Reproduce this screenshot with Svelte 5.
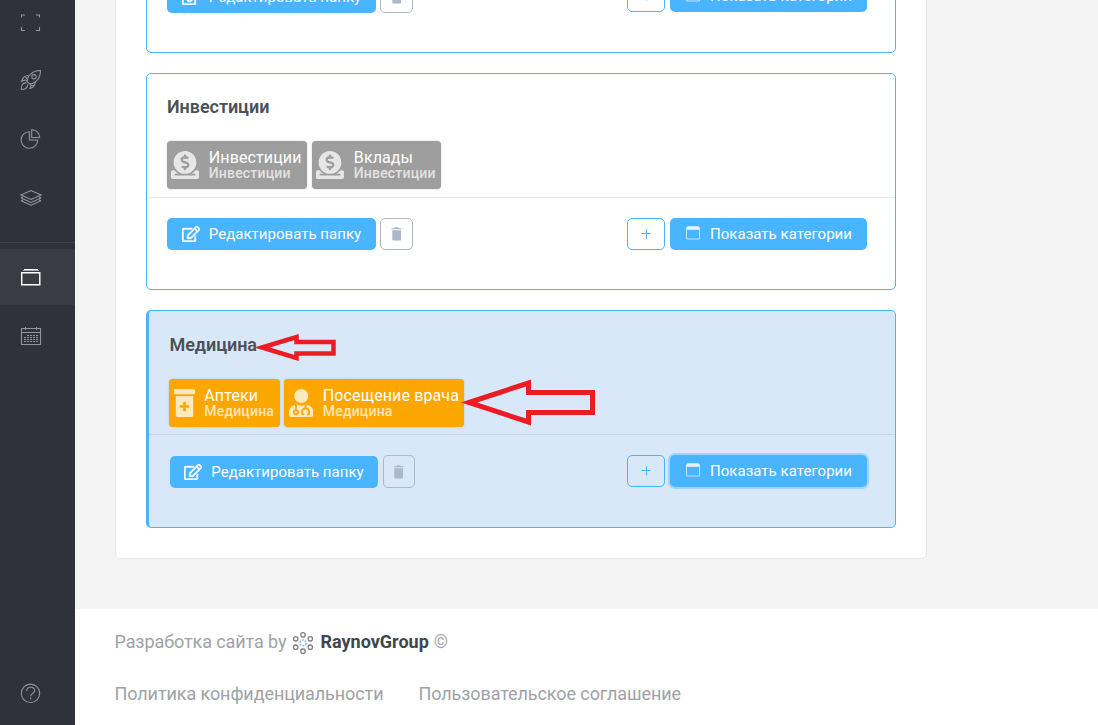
<script>
  const folders = [
    { title: 'Накопления', tiles: [] },
    {
      title: 'Инвестиции',
      tiles: [
        { name: 'Инвестиции', group: 'Инвестиции', icon: 'donate', color: '#9e9e9e', width: 140 },
        { name: 'Вклады', group: 'Инвестиции', icon: 'donate', color: '#9e9e9e', width: 129 }
      ]
    },
    {
      title: 'Медицина',
      active: true,
      tiles: [
        { name: 'Аптеки', group: 'Медицина', icon: 'bottle', color: '#fba700', width: 111 },
        { name: 'Посещение врача', group: 'Медицина', icon: 'doctor', color: '#fba700', width: 180 }
      ]
    }
  ];
  const ring = [[11, 2.8], [18.3, 6.8], [18.3, 15.2], [11, 19.2], [3.7, 15.2], [3.7, 6.8]];
</script>

{#snippet tileIcon(kind)}
  {#if kind === 'donate'}
    <svg class="ti" width="28" height="28" viewBox="0 0 512 512"><path fill-rule="evenodd" d="M256 416c114.900 0 208-93.100 208-208S370.900 0 256 0 48 93.100 48 208s93.100 208 208 208zM233.800 97.400V80.600c0-9.200 7.400-16.600 16.600-16.600h11.100c9.200 0 16.600 7.400 16.600 16.600v17c15.500.8 30.500 6.100 43 15.400 5.600 4.100 6.200 12.300 1.200 17.100L306 145.600c-3.800 3.700-9.500 3.800-14 1-5.400-3.400-11.400-5.100-17.800-5.100h-38.900c-9 0-16.300 8.200-16.300 18.300 0 8.200 5 15.500 12.100 17.600l62.300 18.700c25.700 7.700 43.700 32.400 43.700 60.100 0 34-26.400 61.500-59.100 62.400v16.800c0 9.200-7.400 16.600-16.600 16.600h-11.100c-9.200 0-16.600-7.400-16.600-16.600v-17c-15.500-.8-30.500-6.100-43-15.400-5.600-4.100-6.200-12.300-1.200-17.100l16.300-15.500c3.800-3.700 9.500-3.800 14-1 5.400 3.400 11.400 5.100 17.800 5.100h38.900c9 0 16.300-8.200 16.300-18.300 0-8.200-5-15.500-12.100-17.600l-62.300-18.700c-25.700-7.700-43.700-32.400-43.700-60.100.1-34 26.400-61.500 59.100-62.400zM480 352h-32.500c-19.600 26-44.600 47.700-73 64h63.800c5.300 0 9.600 3.600 9.600 8v16c0 4.400-4.300 8-9.600 8H73.600c-5.300 0-9.600-3.600-9.600-8v-16c0-4.400 4.300-8 9.600-8h63.800c-28.400-16.300-53.300-38-73-64H32c-17.700 0-32 14.300-32 32v96c0 17.700 14.300 32 32 32h448c17.700 0 32-14.300 32-32v-96c0-17.700-14.300-32-32-32z" /></svg>
  {:else if kind === 'bottle'}
    <svg class="ti" width="21" height="28" viewBox="0 0 384 512"><path fill-rule="evenodd" d="M360 0H24C10.800 0 0 10.800 0 24v48c0 13.200 10.800 24 24 24h336c13.200 0 24-10.800 24-24V24c0-13.200-10.800-24-24-24zM32 128v352c0 17.600 14.400 32 32 32h256c17.600 0 32-14.400 32-32V128H32zM280 344h-64v64h-48v-64h-64v-48h64v-64h48v64h64z" /></svg>
  {:else}
    <svg class="ti" width="24.5" height="28" viewBox="0 0 448 512"><path d="M224 256c70.700 0 128-57.300 128-128S294.700 0 224 0 96 57.300 96 128s57.300 128 128 128zM104 424c0 13.300 10.700 24 24 24s24-10.700 24-24-10.700-24-24-24-24 10.700-24 24zm216-135.400v49c36.500 7.400 64 39.800 64 78.400v41.700c0 7.600-5.400 14.200-12.900 15.700l-32.200 6.400c-4.300.9-8.500-1.900-9.400-6.300l-3.100-15.700c-.9-4.300 1.900-8.600 6.300-9.400l19.300-3.900V416c0-62.800-96-65.100-96 1.900v26.700l19.300 3.900c4.300.9 7.100 5.100 6.300 9.400l-3.100 15.700c-.9 4.300-5.100 7.100-9.400 6.300l-31.200-4.200c-7.900-1.100-13.800-7.800-13.800-15.900V416c0-38.600 27.500-70.900 64-78.400v-45.200c-2.200.7-4.400 1.100-6.600 1.900-18 6.300-37.300 9.800-57.400 9.800s-39.400-3.500-57.400-9.800c-7.400-2.600-14.900-4.200-22.600-5.200v81.600c23.100 6.900 40 28.100 40 53.400 0 30.900-25.100 56-56 56s-56-25.100-56-56c0-25.300 16.900-46.500 40-53.400v-80.400C48.500 301 0 355.800 0 422.400v44.800C0 491.900 20.100 512 44.800 512h358.400c24.700 0 44.800-20.100 44.800-44.800v-44.800c0-72-56.800-130.300-128-133.800z" /></svg>
  {/if}
{/snippet}

<div class="page">
  <aside>
    <nav>
      <span class="item"><svg width="22" height="20" viewBox="0 0 22 20"><path d="M1.500 5.500V3H5M16 3h3.500v2.500M1.500 15v3.500H5M16 18.500h3.500V15" /></svg></span>
      <span class="item"><svg width="22" height="22" viewBox="0 1 22 22"><path d="M20.500 1.500c-6 0-9.500 2.500-12 6-1 2-1.500 3.500-1.500 5L9.500 15c2 0 4-.5 5.500-2 4-2.500 5.500-6 5.500-11.500z" /><circle cx="14" cy="7.800" r="2.200" /><path d="M8.500 6.500C5 6.500 2.500 9 1.500 12.500l3-1.500 2.500.5M15.300 12.500c0 4-2 6-5.300 7l1-3-1-2M6.500 14c-3-.5-5.300 1.500-5.300 6.500 4 0 6.500-2 6.500-5M14 16.500l-3-.5M5.500 8l1.500 2" /></svg></span>
      <span class="item"><svg width="22" height="22" viewBox="0 0 22 22"><path d="M9.400 3.700a8.300 8.300 0 1 0 8.300 8.300H9.400zM11.700 1.700v7.800h8a8 8 0 0 0-8-7.800z" /></svg></span>
      <span class="item"><svg width="22" height="18" viewBox="0 .5 22 18"><path d="M1 6.500L11 2l10 4.500L11 11zM1 9.500l10 4.500 10-4.500M1 12.300l10 4.400 10-4.400M1 9.500l2-.9M21 9.500l-2-.9M1 12.300l2-.9M21 12.300l-2-.9" /></svg></span>
      <hr />
      <span class="item current"><svg width="22" height="20" viewBox="0 0 22 20"><path d="M1.700 5.800h18.100v12H1.700z" /><path stroke-width="1" d="M4 2.500h14" /><path stroke-width="1" stroke="#aaabae" d="M3 3.500h16" /></svg></span>
      <span class="item"><svg width="22" height="20" viewBox="0 0 22 20"><path d="M1.500 2.500h19v16h-19zM1.500 6.500h19M5.500 1v3M16.500 1v3" /><path stroke-dasharray="2 1" d="M7 9.500h11M4 11.500h14M4 13.500h14M4 15.500h14" /></svg></span>
    </nav>
    <span class="item help"><svg width="22" height="22" viewBox="0 0 22 22"><circle cx="10.500" cy="11.300" r="9.200" /><path d="M6.700 9c0-5 8-5 8-.4 0 3.200-4 2.700-4 5.700M10.700 15.500v2" /></svg></span>
  </aside>

  <div class="main">
    <div class="content">
      <section class="panel">
        {#each folders as folder}
          <article class:active={folder.active}>
            <div class="body">
              <h3>{folder.title}</h3>
              <div class="tiles">
                {#each folder.tiles as tile}
                  <div class="tile" style="background:{tile.color};width:{tile.width}px">
                    {@render tileIcon(tile.icon)}
                    <div class="names"><span>{tile.name}</span><small>{tile.group}</small></div>
                  </div>
                {/each}
              </div>
            </div>
            <div class="actions">
              <button class="solid edit"><svg width="18" height="16" viewBox="0 0 576 512"><path fill="#fff" stroke="#fff" stroke-width="12" d="M402.300 344.900l32-32c5-5 13.700-1.500 13.700 5.700V464c0 26.500-21.500 48-48 48H48c-26.500 0-48-21.500-48-48V112c0-26.500 21.500-48 48-48h273.500c7.100 0 10.700 8.600 5.700 13.700l-32 32c-1.500 1.500-3.500 2.300-5.700 2.300H48v352h352V350.500c0-2.100.8-4.100 2.300-5.600zm156.600-201.800L296.300 405.700l-90.400 10c-26.200 2.900-48.500-19.200-45.600-45.600l10-90.400L432.900 17.100c22.900-22.900 59.900-22.900 82.700 0l43.200 43.200c22.900 22.900 22.900 60 .1 82.800zM460.100 174L402 115.900 216.200 301.800l-7.300 65.300 65.300-7.300L460.100 174zm64.800-79.700l-43.200-43.200c-4.100-4.100-10.800-4.100-14.800 0L436 82l58.100 58.100 30.900-30.900c4-4.200 4-10.800-.1-14.900z" /></svg><span>Редактировать папку</span></button>
              <button class="trash" aria-label="Удалить"><svg width="12" height="14" viewBox="0 0 12 14"><path fill="#acb7c7" d="M3.500 .3h4v.9h3v1H.5v-1h3zM1.300 3.200h8.700v9.300a1 1 0 0 1-1 1H2.300a1 1 0 0 1-1-1z" /></svg></button>
              <button class="plus" aria-label="Добавить"><svg width="10" height="10" viewBox="0 0 10 10"><path stroke="#49b4ff" d="M.5 4.500h9M5.500 .5v9" /></svg></button>
              <button class="solid show"><svg width="14" height="14" viewBox="0 0 14 14"><path fill="none" stroke="#c4e5ff" d="M.5 3.500h13v9.500H.5z" /><path fill="#e3f3ff" d="M1.500 .3h11L14 2v1.200H0V2z" /></svg><span>Показать категории</span></button>
            </div>
          </article>
        {/each}
      </section>
    </div>
    <footer>
      <p class="credit"><span>Разработка сайта by</span>
        <svg width="22" height="24" viewBox="0 0 22 22">{#each ring as [x, y]}<circle cx={x} cy={y} r="2.200" fill="none" stroke="#808185" stroke-width="1.300" />{/each}<circle cx="11" cy="11" r="3" fill="none" stroke="#6dc3ff" stroke-width="1.500" stroke-dasharray="2 1.140" /></svg>
        <b>RaynovGroup</b><span>©</span></p>
      <p class="links"><span>Политика конфиденциальности</span><span>Пользовательское соглашение</span></p>
    </footer>
  </div>

  <svg class="marks" width="1098" height="725" viewBox="0 0 1098 725">
    <path stroke-width="4.500" d="M262 347.500L296.500 337V342h37v11.500h-37V358z" />
    <path stroke-width="5" d="M469 402.500L528.500 383v9.500h64v20h-64v9.500z" />
  </svg>
</div>

<style>
  :global(body) { margin: 0; overflow: hidden; }
  .page { position: relative; display: flex; width: 1098px; height: 725px; overflow: hidden; background: #f4f4f4; font-family: Roboto, sans-serif; }
  aside { width: 75px; background: #30323b; display: flex; flex-direction: column; justify-content: space-between; overflow: hidden; }
  nav { margin-top: -6px; }
  .item { display: flex; align-items: center; height: 56px; padding-left: 20px; margin-bottom: 2.500px; }
  .item svg { fill: none; stroke: #93959b; stroke-width: 1.100; }
  .item.current { background: #3a3c45; margin-bottom: 3px; }
  .item.current svg { stroke: #fff; stroke-width: 1.400; }
  .item.help { margin-bottom: 4px; }
  hr { border: 0; height: 1px; background: #3f414a; margin: 16.500px 0 6px; }
  .main { flex: 1; display: flex; flex-direction: column; }
  .content { height: 609px; box-sizing: border-box; padding: 0 0 50px 40px; display: flex; flex-direction: column; justify-content: flex-end; overflow: hidden; }
  .panel { width: 812px; box-sizing: border-box; padding: 30px; border: 1px solid #e8e8e8; border-radius: 5px; background: #fff; display: flex; flex-direction: column; gap: 20px; flex-shrink: 0; }
  article { height: 217px; box-sizing: border-box; border: 1px solid #49b4ff; border-radius: 5px; background: #fff; }
  article.active { height: 218px; border-left-width: 3px; background: #d8e8f8; }
  .body { height: 124px; box-sizing: border-box; padding: 19px 20px 0; border-bottom: 1px solid #ebebed; display: flex; flex-direction: column; }
  .active .body { border-color: #c5d5e5; padding: 20px 20px 0 21px; }
  h3 { margin: 0; height: 48px; line-height: 27px; font-size: 18px; font-weight: 600; color: #4c5057; letter-spacing: -.05px; }
  .active h3 { line-height: 28px; margin-left: -.5px; }
  .active h3 + .tiles { margin-top: 0; }
  .active .body { padding-top: 20px; }
  .tiles { display: flex; gap: 5px; }
  .active .tiles { gap: 4px; margin-left: -1px; }
  .tile { height: 48px; box-sizing: border-box; padding: 0 4.500px; border-radius: 4px; display: flex; align-items: center; gap: 9.800px; color: #fff; white-space: nowrap; box-shadow: 0 0 2px #0003; }
  .ti { fill: #fff; opacity: .75; flex: none; }
  .tile .ti[width="28"] { margin-left: -.5px; }
  .names { display: flex; flex-direction: column; }
  .names span { font-size: 16px; line-height: 17px; letter-spacing: .12px; }
  .names small { font-size: 14px; line-height: 15px; font-weight: 500; opacity: .7; letter-spacing: .18px; }
  .actions { display: flex; align-items: flex-start; padding: 20px 28px 0 20px; }
  .active .actions { padding-left: 21px; }
  button { font: 400 15px Roboto, sans-serif; height: 32px; box-sizing: border-box; padding: 0; border-radius: 5px; display: flex; align-items: center; justify-content: center; background: transparent; white-space: nowrap; }
  .solid { border: 0; background: #49b4ff; color: #fff; letter-spacing: .03px; }
  .edit { width: 209px; gap: 9px; }
  .trash { width: 33px; margin-left: 4px; border: 1px solid #acb7c7; }
  .plus { width: 38px; margin-left: auto; border: 1px solid #49b4ff; }
  .show { width: 197px; margin-left: 5px; gap: 10px; padding-left: 1px; }
  .show svg { margin-top: -2px; }
  article:first-child .plus, article:first-child .show { margin-top: -1px; }
  .active .edit { margin-top: 1px; width: 208px; }
  .active .trash { width: 32px; margin-left: 5px; height: 33px; }
  .active .show { box-shadow: 0 0 0 2px #9ed3fc; }
  footer { flex: 1; background: #fff; padding: 18px 0 0 39.500px; font-size: 18px; color: #a0a2a6; letter-spacing: -.09px; }
  footer p { margin: 0; display: flex; align-items: center; height: 28px; white-space: nowrap; }
  .credit svg { margin: 3px 6px 0; }
  .credit b { color: #42454c; font-weight: 700; margin-right: 5px; letter-spacing: 0; }
  footer .links { margin-top: 24px; gap: 35px; }
  .marks { position: absolute; inset: 0; fill: none; stroke: #ed1c24; pointer-events: none; }
</style>
